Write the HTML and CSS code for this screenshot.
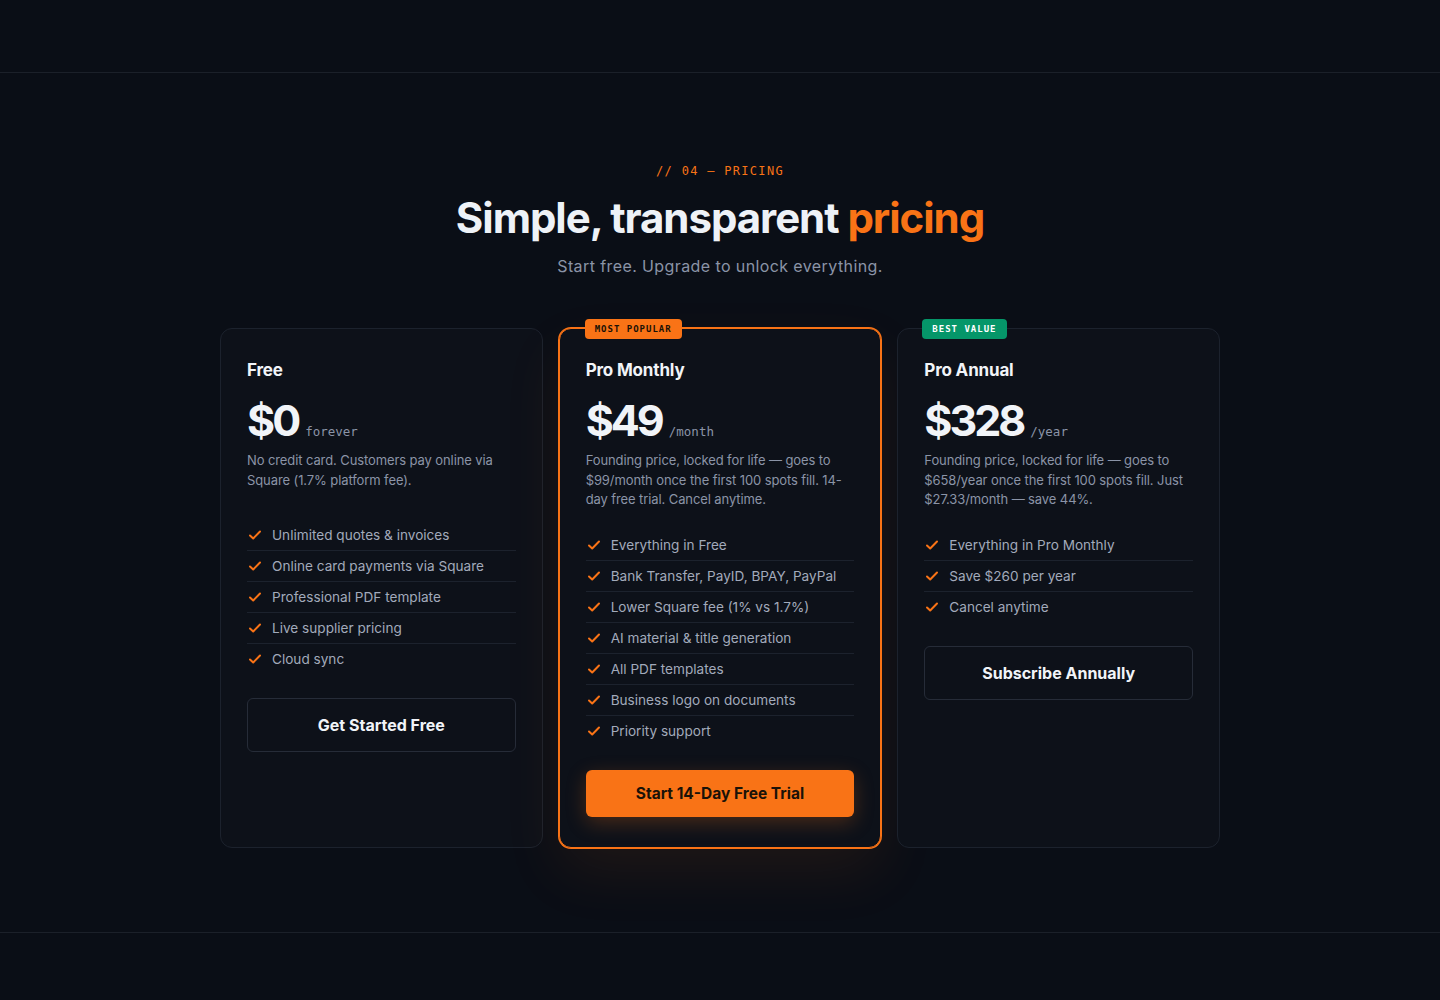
FILE: index.html
```html
<!DOCTYPE html>
<html lang="en">
<head>
    <meta charset="UTF-8">
    <meta name="viewport" content="width=device-width, initial-scale=1.0">
    <title>Pricing</title>
    <link rel="stylesheet" href="styles.css">
</head>
<body>
    <div class="topbar"></div>

    <section class="pricing">
        <p class="eyebrow">// 04 — PRICING</p>
        <h2 class="title">Simple, transparent <span class="accent">pricing</span></h2>
        <p class="subtitle">Start free. Upgrade to unlock everything.</p>

        <div class="plans">
            <div class="plan">
                <h3 class="plan-name">Free</h3>
                <div class="price"><span class="amount">$0</span><span class="period">forever</span></div>
                <p class="plan-desc">No credit card. Customers pay online via Square (1.7% platform fee).</p>
                <ul class="features">
                    <li><svg class="check" viewBox="0 0 14 14"><path d="M2 7.5l3.2 3L12 3.5"/></svg>Unlimited quotes &amp; invoices</li>
                    <li><svg class="check" viewBox="0 0 14 14"><path d="M2 7.5l3.2 3L12 3.5"/></svg>Online card payments via Square</li>
                    <li><svg class="check" viewBox="0 0 14 14"><path d="M2 7.5l3.2 3L12 3.5"/></svg>Professional PDF template</li>
                    <li><svg class="check" viewBox="0 0 14 14"><path d="M2 7.5l3.2 3L12 3.5"/></svg>Live supplier pricing</li>
                    <li><svg class="check" viewBox="0 0 14 14"><path d="M2 7.5l3.2 3L12 3.5"/></svg>Cloud sync</li>
                </ul>
                <button class="btn btn-outline">Get Started Free</button>
            </div>

            <div class="plan plan-featured">
                <span class="badge badge-orange">MOST POPULAR</span>
                <h3 class="plan-name">Pro Monthly</h3>
                <div class="price"><span class="amount">$49</span><span class="period">/month</span></div>
                <p class="plan-desc">Founding price, locked for life — goes to $99/month once the first 100 spots fill. 14-day free trial. Cancel anytime.</p>
                <ul class="features">
                    <li><svg class="check" viewBox="0 0 14 14"><path d="M2 7.5l3.2 3L12 3.5"/></svg>Everything in Free</li>
                    <li><svg class="check" viewBox="0 0 14 14"><path d="M2 7.5l3.2 3L12 3.5"/></svg>Bank Transfer, PayID, BPAY, PayPal</li>
                    <li><svg class="check" viewBox="0 0 14 14"><path d="M2 7.5l3.2 3L12 3.5"/></svg>Lower Square fee (1% vs 1.7%)</li>
                    <li><svg class="check" viewBox="0 0 14 14"><path d="M2 7.5l3.2 3L12 3.5"/></svg>AI material &amp; title generation</li>
                    <li><svg class="check" viewBox="0 0 14 14"><path d="M2 7.5l3.2 3L12 3.5"/></svg>All PDF templates</li>
                    <li><svg class="check" viewBox="0 0 14 14"><path d="M2 7.5l3.2 3L12 3.5"/></svg>Business logo on documents</li>
                    <li><svg class="check" viewBox="0 0 14 14"><path d="M2 7.5l3.2 3L12 3.5"/></svg>Priority support</li>
                </ul>
                <button class="btn btn-primary">Start 14-Day Free Trial</button>
            </div>

            <div class="plan">
                <span class="badge badge-green">BEST VALUE</span>
                <h3 class="plan-name">Pro Annual</h3>
                <div class="price"><span class="amount">$328</span><span class="period">/year</span></div>
                <p class="plan-desc">Founding price, locked for life — goes to $658/year once the first 100 spots fill. Just $27.33/month — save 44%.</p>
                <ul class="features">
                    <li><svg class="check" viewBox="0 0 14 14"><path d="M2 7.5l3.2 3L12 3.5"/></svg>Everything in Pro Monthly</li>
                    <li><svg class="check" viewBox="0 0 14 14"><path d="M2 7.5l3.2 3L12 3.5"/></svg>Save $260 per year</li>
                    <li><svg class="check" viewBox="0 0 14 14"><path d="M2 7.5l3.2 3L12 3.5"/></svg>Cancel anytime</li>
                </ul>
                <button class="btn btn-outline">Subscribe Annually</button>
            </div>
        </div>
    </section>
</body>
</html>
```

FILE: styles.css
```css
body {
    margin: 0;
    background-color: #0a0e16;
    color: #e8ecf3;
    font-family: Inter, "Noto Sans", sans-serif;
}
.topbar {
    height: 72px;
    border-bottom: 1px solid #1b2029;
}
.pricing {
    padding: 91px 0 84px;
    text-align: center;
    border-bottom: 1px solid #1b2029;
}
.eyebrow {
    margin: 0;
    font-family: "DejaVu Sans Mono", monospace;
    font-size: 12px;
    line-height: 14px;
    letter-spacing: 1.3px;
    color: #f97316;
}
.title {
    margin: 15px 0 0;
    font-size: 42px;
    line-height: 50px;
    font-weight: 700;
    letter-spacing: -0.025em;
    color: #eef2f7;
}
.accent {
    color: #f97316;
}
.subtitle {
    margin: 11px 0 0;
    font-size: 16px;
    line-height: 24px;
    letter-spacing: 0.4px;
    color: #8b94a7;
}
.plans {
    display: grid;
    grid-template-columns: repeat(3, 1fr);
    gap: 16px;
    width: 1000px;
    margin: 50px auto 0;
    text-align: left;
}
.plan {
    position: relative;
    display: flex;
    flex-direction: column;
    align-items: flex-start;
    padding: 28px 26px 30px;
    background-color: #0d1119;
    border: 1px solid #1c222d;
    border-radius: 12px;
}
.plan-featured {
    border-color: #f97316;
    box-shadow: 0 0 0 1px #f97316, 0 24px 60px rgba(249, 115, 22, 0.09);
}
.badge {
    position: absolute;
    top: -10px;
    left: 24px;
    height: 20px;
    padding: 0 10px;
    border-radius: 4px;
    font-family: "DejaVu Sans Mono", monospace;
    font-size: 9px;
    font-weight: 700;
    line-height: 20px;
    letter-spacing: 1px;
}
.badge-orange {
    left: 25px;
    background-color: #f97316;
    color: #1b1206;
}
.badge-green {
    background-color: #059669;
    color: #ffffff;
}
.plan-name {
    margin: 0;
    font-size: 17px;
    line-height: 26px;
    font-weight: 700;
    letter-spacing: -0.01em;
    color: #f1f4f8;
}
.price {
    display: flex;
    align-items: baseline;
    margin-top: 15px;
}
.amount {
    font-size: 43px;
    line-height: 44px;
    font-weight: 700;
    letter-spacing: -0.07em;
    color: #f1f4f8;
}
.period {
    margin-left: 7px;
    font-family: "DejaVu Sans Mono", monospace;
    font-size: 12.5px;
    color: #8b94a7;
}
.plan-desc {
    min-height: 49px;
    margin: 9px 0 0;
    font-size: 13px;
    line-height: 19.5px;
    letter-spacing: -0.1px;
    color: #8b94a7;
}
.features {
    list-style: none;
    width: 100%;
    margin: 20px 0 0;
    padding: 0;
}
.features li {
    display: flex;
    align-items: center;
    padding: 5px 0;
    font-size: 13.6px;
    line-height: 20px;
    color: #a2aabb;
    border-bottom: 1px solid #1c222d;
}
.features li:last-child {
    border-bottom: none;
}
.check {
    width: 14px;
    height: 14px;
    margin: 0 10px 0 1px;
    fill: none;
    stroke: #f97316;
    stroke-width: 2;
    stroke-linecap: round;
    stroke-linejoin: round;
}
.btn {
    width: 100%;
    margin-top: 24px;
    border-radius: 6px;
    font-family: Inter, "Noto Sans", sans-serif;
    font-size: 16px;
    font-weight: 700;
    cursor: pointer;
}
.btn-outline {
    height: 54px;
    background: transparent;
    border: 1px solid #262c38;
    color: #f1f4f8;
}
.btn-primary {
    height: 47px;
    background-color: #f97316;
    border: none;
    font-size: 15.5px;
    color: #1a1208;
    box-shadow: 0 6px 20px rgba(249, 115, 22, 0.25);
}
```
